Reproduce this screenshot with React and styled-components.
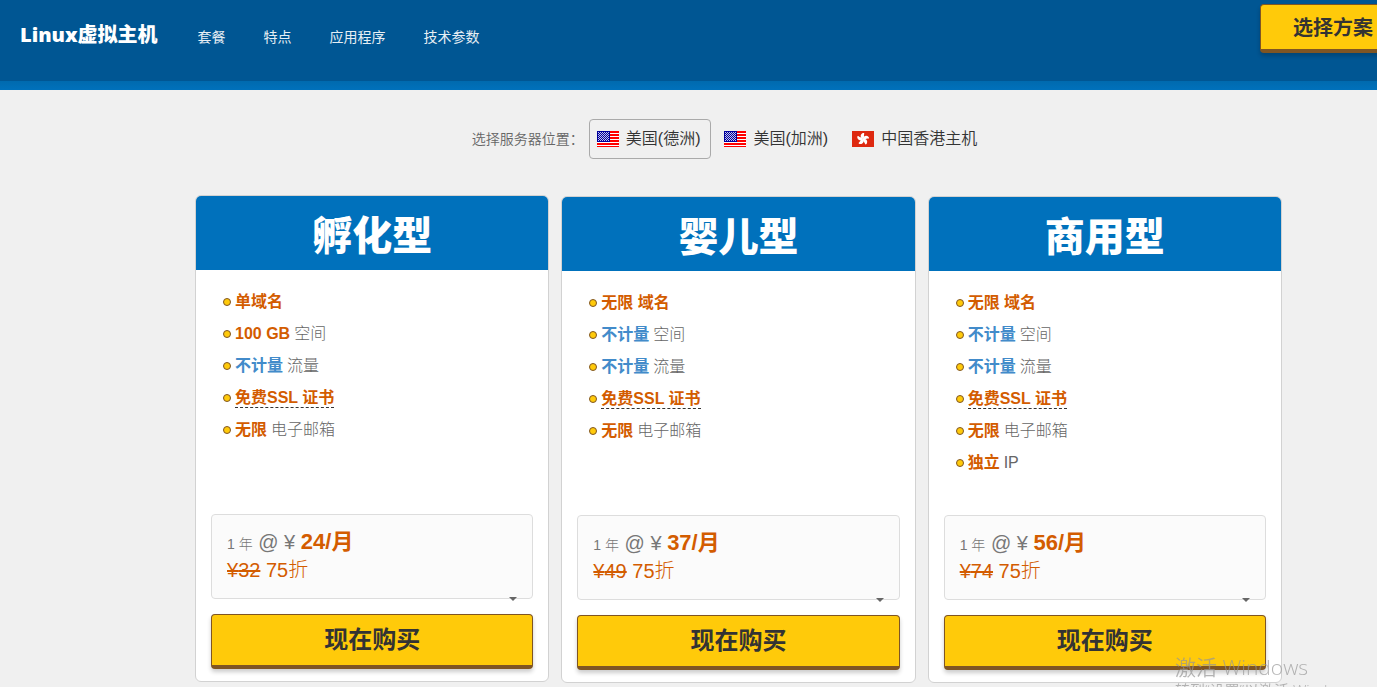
import React, { useState } from "react";
import styled, { createGlobalStyle, css } from "styled-components";

const navLinks = ["套餐", "特点", "应用程序", "技术参数"];

const locations = [
  { id: "texas", label: "美国(德洲)", flag: "us" },
  { id: "california", label: "美国(加洲)", flag: "us" },
  { id: "hongkong", label: "中国香港主机", flag: "hk" },
];

const plans = [
  {
    name: "孵化型",
    price: "24",
    oldPrice: "32",
    featured: true,
    features: [
      { strong: "单域名" },
      { strong: "100 GB", text: "空间" },
      { strong: "不计量", text: "流量", blue: true },
      { strong: "免费SSL 证书", tip: true },
      { strong: "无限", text: "电子邮箱" },
    ],
  },
  {
    name: "婴儿型",
    price: "37",
    oldPrice: "49",
    features: [
      { strong: "无限 域名" },
      { strong: "不计量", text: "空间", blue: true },
      { strong: "不计量", text: "流量", blue: true },
      { strong: "免费SSL 证书", tip: true },
      { strong: "无限", text: "电子邮箱" },
    ],
  },
  {
    name: "商用型",
    price: "56",
    oldPrice: "74",
    features: [
      { strong: "无限 域名" },
      { strong: "不计量", text: "空间", blue: true },
      { strong: "不计量", text: "流量", blue: true },
      { strong: "免费SSL 证书", tip: true },
      { strong: "无限", text: "电子邮箱" },
      { strong: "独立", text: "IP" },
    ],
  },
];

const UsFlag = () => (
  <FlagSvg viewBox="0 0 22 16" shapeRendering="crispEdges" aria-hidden="true">
    <rect width="22" height="16" fill="#fff" />
    <path
      d="M0 0h22v2H0zM0 3h22v2H0zM0 6h22v2H0zM0 9h22v2H0zM0 12h22v2H0zM0 15h22v1H0z"
      fill="#f00"
    />
    <rect width="13" height="11" fill="#00009c" />
    {[1, 2, 3, 4, 5, 6, 7, 8, 9].map((y) => (
      <path
        key={y}
        d={`M${y % 2 ? 1 : 2} ${y + 0.5}H12`}
        stroke="#c4c4ec"
        strokeDasharray="1 1"
      />
    ))}
  </FlagSvg>
);

const HkFlag = () => (
  <FlagSvg viewBox="0 0 22 16" aria-hidden="true">
    <rect width="22" height="16" fill="#de2910" />
    {[0, 72, 144, 216, 288].map((angle) => (
      <path
        key={angle}
        d="M11 8C8.4 7.2 7.6 3.4 10.8 2C12 1.6 12.6 2.4 12.2 3.2C11.4 4.6 13 5.8 11 8Z"
        transform={`rotate(${angle} 11 8)`}
        fill="#fff"
      />
    ))}
  </FlagSvg>
);

const PlanCard = ({ plan }) => {
  const { name, price, oldPrice, features, featured } = plan;
  return (
    <Card $featured={featured}>
      <CardTitle>{name}</CardTitle>
      <CardBody>
        <Features>
          {features.map(({ strong, text, blue, tip }) => (
            <Feature key={strong + text}>
              <Strong $blue={blue} $tip={tip}>
                {strong}
              </Strong>
              {text}
            </Feature>
          ))}
        </Features>
        <Term type="button" aria-haspopup="listbox">
          <PriceLine>
            <small>1 年</small> @ ¥ <b>{price}/月</b>
          </PriceLine>
          <Discount>
            <del>¥{oldPrice}</del> 75折
          </Discount>
          <Caret viewBox="0 0 8 4" aria-hidden="true">
            <path d="M0 0h8L4 4z" fill="#666" />
          </Caret>
        </Term>
        <BuyButton type="button">现在购买</BuyButton>
      </CardBody>
    </Card>
  );
};

const App = () => {
  const [active, setActive] = useState("texas");
  return (
    <>
      <GlobalStyle />
      <Page>
        <Header>
          <Brand>Linux虚拟主机</Brand>
          <Nav>
            {navLinks.map((link) => (
              <a key={link} href="#plans">
                {link}
              </a>
            ))}
          </Nav>
          <SelectPlan type="button">选择方案</SelectPlan>
        </Header>
        <Main>
          <Locations role="group" aria-labelledby="location-label">
            <LocationLabel id="location-label">选择服务器位置：</LocationLabel>
            {locations.map(({ id, label, flag }) => (
              <LocationButton
                key={id}
                type="button"
                aria-pressed={active === id}
                $active={active === id}
                onClick={() => setActive(id)}
              >
                {flag === "us" ? <UsFlag /> : <HkFlag />}
                <span>{label}</span>
              </LocationButton>
            ))}
          </Locations>
          <Plans id="plans">
            {plans.map((plan) => (
              <PlanCard key={plan.name} plan={plan} />
            ))}
          </Plans>
        </Main>
        <Watermark>
          <p>激活 Windows</p>
          <span>转到“设置”以激活 Windows。</span>
        </Watermark>
      </Page>
    </>
  );
};

export default App;

const GlobalStyle = createGlobalStyle`
  *, *::before, *::after {
    box-sizing: border-box;
  }

  body {
    margin: 0;
    background: #f0f0f0;
    color: #666;
    font-family: "Liberation Sans", "Noto Sans CJK SC", sans-serif;
    font-size: 16px;
  }

  button {
    font-family: inherit;
    cursor: pointer;
  }

  h1, h2, p, ul {
    margin: 0;
    padding: 0;
  }
`;

const Page = styled.div`
  min-height: 100vh;
  overflow: hidden;
`;

const Header = styled.header`
  display: flex;
  align-items: flex-start;
  height: 90px;
  padding-left: 20px;
  background: linear-gradient(#006aae, #0071bc) bottom / 100% 9px no-repeat
    #005693;
`;

const Brand = styled.h1`
  margin-top: 20px;
  color: #fff;
  font-family: "Open Sans", "Noto Sans CJK SC", sans-serif;
  font-size: 20px;
  font-weight: 900;
  line-height: 30px;
`;

const Nav = styled.nav`
  display: flex;
  gap: 38px;
  margin: 27px auto 0 40px;

  a {
    color: #e6eef4;
    font-size: 14px;
    line-height: 20px;
    text-decoration: none;
  }
`;

const yellowButton = css`
  background: #ffca0a;
  border: 1px solid #7f5523;
  border-bottom-width: 4px;
  border-radius: 4px;
  box-shadow: 0 3px 4px rgba(0, 0, 0, 0.2);
  color: #333;
  font-weight: 700;
`;

/* runs past the right edge of the header */
const SelectPlan = styled.button`
  ${yellowButton}
  flex: none;
  height: 49px;
  margin: 4px -31px 0 0;
  padding: 0 34px 2px 32px;
  font-size: 20px;
`;

const Main = styled.main`
  padding: 29px 95px 4px 195px;
`;

const Locations = styled.div`
  display: flex;
  align-items: center;
  justify-content: center;
  gap: 5px;
  padding-right: 17px;
`;

const LocationLabel = styled.span`
  padding-bottom: 2px;
  font-size: 14px;
  font-weight: 350;
`;

const LocationButton = styled.button`
  display: flex;
  align-items: center;
  gap: 7px;
  height: 40px;
  padding: 0 10px 0 7px;
  background: transparent;
  border: 1px solid ${({ $active }) => ($active ? "#aaa" : "transparent")};
  border-radius: 4px;
  color: #333;
  font-size: 16px;
  font-weight: 350;

  span {
    padding-bottom: 4px;
  }
`;

const FlagSvg = styled.svg`
  width: 22px;
  height: 16px;
`;

const Plans = styled.section`
  display: grid;
  grid-template-columns: repeat(3, 1fr);
  gap: 12px;
  margin-top: 37px;
`;

const Card = styled.article`
  display: flex;
  flex-direction: column;
  margin: ${({ $featured }) => ($featured ? "-1px 0 1px" : "0")};
  background: #fff;
  border: 1px solid #d2d2d2;
  border-radius: 6px;
  overflow: hidden;
`;

const CardTitle = styled.h2`
  padding-top: 6px;
  background: #0071bc;
  color: #fff;
  font-size: 40px;
  font-weight: 900;
  line-height: 68px;
  text-align: center;
`;

const CardBody = styled.div`
  padding: 16px 15px 12px;
`;

const Features = styled.ul`
  min-height: 228px;
  padding-left: 12px;
  list-style: none;
`;

const Feature = styled.li`
  display: flex;
  align-items: center;
  gap: 4px;
  height: 32px;
  color: #666;
  font-weight: 300;
  line-height: 18px;

  &::before {
    content: "";
    width: 8px;
    height: 8px;
    background: #ffca0a;
    border: 1px solid #7f5523;
    border-radius: 50%;
  }
`;

const Strong = styled.strong`
  color: ${({ $blue }) => ($blue ? "#428bca" : "#d35c00")};
  font-weight: 700;
  border-bottom: ${({ $tip }) => ($tip ? "1px dashed #333" : "none")};
`;

const Term = styled.button`
  position: relative;
  display: block;
  width: 100%;
  height: 85px;
  padding: 0 15px 4px;
  background: #fbfbfb;
  border: 1px solid #ddd;
  border-radius: 4px;
  color: #777;
  font-size: 20px;
  font-weight: 300;
  text-align: left;
`;

const PriceLine = styled.span`
  display: block;
  line-height: 28px;

  small {
    font-size: 14px;
  }

  b {
    color: #d35c00;
    font-size: 22px;
    font-weight: 700;
  }
`;

const Discount = styled.span`
  display: block;
  color: #d35c00;
  line-height: 24px;
`;

const Caret = styled.svg`
  position: absolute;
  right: 15px;
  bottom: -3px;
  width: 8px;
  height: 4px;
`;

const BuyButton = styled.button`
  ${yellowButton}
  width: 100%;
  height: 55px;
  margin-top: 15px;
  padding-bottom: 6px;
  font-size: 24px;
`;

const Watermark = styled.aside`
  position: fixed;
  left: calc(100% - 202px);
  top: calc(100% - 35px);
  color: rgba(150, 150, 150, 0.7);
  font-family: "Open Sans", "Noto Sans CJK SC", sans-serif;
  font-weight: 350;
  white-space: nowrap;
  pointer-events: none;

  p {
    font-size: 21px;
    line-height: 30px;
  }

  span {
    display: block;
    font-size: 15px;
    line-height: 16px;
  }
`;
